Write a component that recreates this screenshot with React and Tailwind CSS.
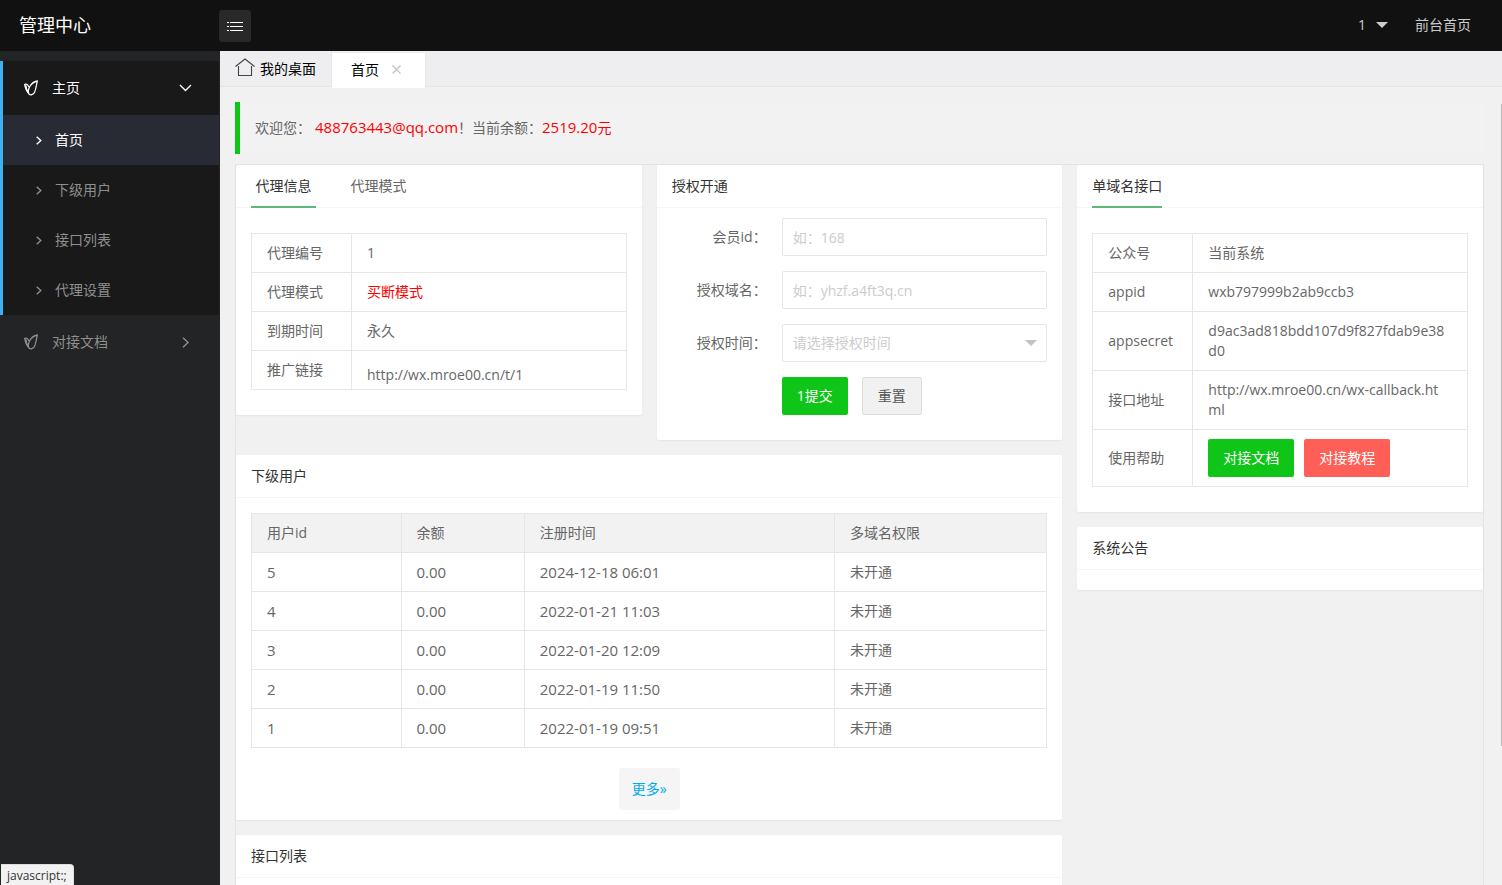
import React, { useState } from 'react';
import clsx from 'clsx';

const sideItems = ['首页', '下级用户', '接口列表', '代理设置'];

const users = [
  { id: 5, balance: '0.00', time: '2024-12-18 06:01', multi: '未开通' },
  { id: 4, balance: '0.00', time: '2022-01-21 11:03', multi: '未开通' },
  { id: 3, balance: '0.00', time: '2022-01-20 12:09', multi: '未开通' },
  { id: 2, balance: '0.00', time: '2022-01-19 11:50', multi: '未开通' },
  { id: 1, balance: '0.00', time: '2022-01-19 09:51', multi: '未开通' }
];

function LeafIcon() {
  return (
    <svg className="w-[14px] h-[16px] shrink-0" viewBox="0 0 14 16" fill="none" stroke="currentColor" strokeWidth="1.3" strokeLinejoin="round">
      <path d="M13.300 1C10.500 1.600 7.200 3.800 5.600 6.800 4.300 9.300 4 12.600 5.200 14.300c1.400 1 3.700.4 5-1.500C12 10 12.300 5 13.300 1z" />
      <path d="M4.800 13.600C2.600 11.400 1.300 8.200.700 4.400 2.600 3.600 4.100 4.600 4.700 7M1.800 5.200c.3 2.600 1 5 2.200 6.400" />
    </svg>
  );
}

function Arrow({ className, d, box }) {
  return (
    <svg className={className} viewBox={box} fill="none" stroke="currentColor" strokeWidth="1.4">
      <path d={d} />
    </svg>
  );
}

function Card({ children }) {
  return <section className="bg-white rounded-xs shadow-[0_1px_2px_0_rgba(0,0,0,0.05)]">{children}</section>;
}

function CardTitle({ children }) {
  return <h2 className="h-[43px] px-[15px] leading-[42px] border-b border-[#f6f6f6] text-[#333]">{children}</h2>;
}

function CardTabs({ items }) {
  const [active, setActive] = useState(0);

  return (
    <div className="flex gap-[30px] h-[43px] px-[15px] border-b border-[#f6f6f6]">
      {items.map((item, idx) => (
        <button
          key={item}
          type="button"
          onClick={() => setActive(idx)}
          className={clsx(
            'h-[43px] min-w-[65px] border-b-2 leading-[38px]',
            idx === active ? 'border-[#5fb878] text-[#333]' : 'border-transparent'
          )}
        >
          {item}
        </button>
      ))}
    </div>
  );
}

function InfoTable({ rows }) {
  return (
    <table className="w-full table-fixed border-collapse">
      <tbody>
        {rows.map(row => (
          <tr key={row.label}>
            <th scope="row" className="w-[100px] px-[15px] py-[9px] border border-[#e6e6e6] text-left font-normal">
              {row.label}
            </th>
            <td className={clsx('pl-[15px] pr-5 border border-[#e6e6e6] break-all', row.className || 'py-[9px]')}>{row.value}</td>
          </tr>
        ))}
      </tbody>
    </table>
  );
}

function Field({ id, label, children }) {
  return (
    <div className="flex">
      <label htmlFor={id} className="w-[110px] shrink-0 pr-[15px] text-right leading-[38px]">
        {label}
      </label>
      <div className="relative flex-1 min-w-0">{children}</div>
    </div>
  );
}

function Header() {
  return (
    <header className="flex items-center h-[51px] shrink-0 bg-[#111] text-[#ccc]">
      <h1 className="w-[219px] shrink-0 pl-[19px] pb-[2px] text-[18px] text-white">管理中心</h1>
      <button type="button" aria-label="菜单" className="flex items-center justify-center w-8 h-8 rounded-[3px] bg-[#292929] text-white">
        <svg className="w-4 h-3" viewBox="0 0 16 12" stroke="currentColor" strokeWidth="1">
          <path d="M0 2.500h2M3 2.500h13M0 6.500h2M3 6.500h13M0 10.500h2M3 10.500h13" />
        </svg>
      </button>
      <nav className="ml-auto flex items-center gap-[27px] pr-[31px] pb-[2px]">
        <button type="button" className="flex items-center gap-[10px]">
          1
          <svg className="w-3 h-[6px]" viewBox="0 0 12 6" fill="currentColor">
            <path d="M0 0h12L6 6z" />
          </svg>
        </button>
        <a href="#front">前台首页</a>
      </nav>
    </header>
  );
}

function Sidebar() {
  const [current, setCurrent] = useState('首页');

  return (
    <aside className="w-[220px] shrink-0 pt-[10px] pr-px bg-[#222425] text-[#8f8f8f]">
      <div className="border-l-3 border-[#3db3f2] bg-[#191919]">
        <button type="button" className="flex items-center w-full h-[54px] pl-[21px] pr-[27px] text-white">
          <LeafIcon />
          <span className="ml-[14px]">主页</span>
          <Arrow className="ml-auto w-[13px] h-[8px]" box="0 0 13 8" d="M1 1l5.500 5.500L12 1" />
        </button>
        {sideItems.map(item => (
          <a
            key={item}
            href="#page"
            onClick={() => setCurrent(item)}
            className={clsx(
              'flex items-center gap-[13px] h-[50px] pl-[33px]',
              item === current && 'bg-[#282b33] text-white'
            )}
          >
            <Arrow className="w-[6px] h-[9px]" box="0 0 6 9" d="M.7.7L4.800 4.500.7 8.300" />
            {item}
          </a>
        ))}
      </div>
      <button type="button" className="flex items-center w-full h-[54px] pl-6 pr-[30px]">
        <LeafIcon />
        <span className="ml-[14px]">对接文档</span>
        <Arrow className="ml-auto w-[7px] h-[11px]" box="0 0 7 11" d="M1 .7l5 4.800-5 4.800" />
      </button>
    </aside>
  );
}

function PageTabs() {
  return (
    <div className="flex h-[36px] shrink-0 bg-[#eeeef0] border-b border-[#e4e4e4] text-black">
      <button type="button" className="flex items-center gap-[5px] pl-[15px] pr-[15px] border-r border-[#e4e4e4]">
        <svg className="w-5 h-[19px] mb-[2px]" viewBox="0 0 20 19" fill="none" stroke="#444" strokeWidth="1.100">
          <path d="M.5 8.500L10 1l9.500 7.500M3.500 8v9.500h13V8" />
        </svg>
        我的桌面
      </button>
      <div className="relative z-10 flex items-center gap-[13px] h-[35px] mt-[2px] pl-[19px] pr-6 pb-[2px] bg-white border-r border-[#e9e9e9]">
        首页
        <button type="button" aria-label="关闭" className="text-[#c2c2c2]">
          <svg className="w-[9px] h-[9px]" viewBox="0 0 9 9" stroke="currentColor" strokeWidth="1.200">
            <path d="M.5.500l8 8M8.500.500l-8 8" />
          </svg>
        </button>
      </div>
    </div>
  );
}

function AuthForm() {
  const [period, setPeriod] = useState('');
  const inputClass = 'block w-full h-[38px] px-[10px] border border-[#e6e6e6] rounded-xs bg-white placeholder:text-[#ccc] outline-none';

  return (
    <form className="flex flex-col gap-[15px] px-[15px] pt-[10px] pb-[25px]" onSubmit={e => e.preventDefault()}>
      <Field id="member" label="会员id：">
        <input id="member" type="text" placeholder="如：168" className={inputClass} />
      </Field>
      <Field id="domain" label="授权域名：">
        <input id="domain" type="text" placeholder="如：yhzf.a4ft3q.cn" className={inputClass} />
      </Field>
      <Field id="period" label="授权时间：">
        <select
          id="period"
          value={period}
          onChange={e => setPeriod(e.target.value)}
          className={clsx(inputClass, 'appearance-none', period === '' && 'text-[#ccc]')}
        >
          <option value="">请选择授权时间</option>
          <option value="1">一年</option>
          <option value="0">永久</option>
        </select>
        <svg className="absolute right-[10px] top-4 w-3 h-[6px] pointer-events-none" viewBox="0 0 12 6" fill="#c2c2c2">
          <path d="M0 0h12L6 6z" />
        </svg>
      </Field>
      <div className="flex gap-[14px] pl-[110px]">
        <button type="submit" className="h-[38px] px-[15px] rounded-xs bg-[#0fc518] text-white">1提交</button>
        <button
          type="reset"
          onClick={() => setPeriod('')}
          className="h-[38px] px-[15px] rounded-xs border border-[#ddd] bg-[#f1f1f1] text-[#555]"
        >
          重置
        </button>
      </div>
    </form>
  );
}

function UserTable() {
  const cell = 'px-[15px] py-[9px] border border-[#e6e6e6] text-left font-normal';

  return (
    <table className="w-full table-fixed border-collapse">
      <thead>
        <tr className="bg-[#f2f2f2]">
          <th className={clsx(cell, 'w-[18.8%]')}>用户id</th>
          <th className={clsx(cell, 'w-[15.5%]')}>余额</th>
          <th className={clsx(cell, 'w-[39%]')}>注册时间</th>
          <th className={cell}>多域名权限</th>
        </tr>
      </thead>
      <tbody>
        {users.map(user => (
          <tr key={user.id}>
            <td className={clsx(cell, 'text-[15px]')}>{user.id}</td>
            <td className={clsx(cell, 'text-[15px]')}>{user.balance}</td>
            <td className={clsx(cell, 'text-[15px]')}>{user.time}</td>
            <td className={cell}>{user.multi}</td>
          </tr>
        ))}
      </tbody>
    </table>
  );
}

const agentRows = [
  { label: '代理编号', value: '1' },
  { label: '代理模式', value: '买断模式', className: 'py-[9px] text-[#f00]' },
  { label: '到期时间', value: '永久' },
  { label: '推广链接', value: 'http://wx.mroe00.cn/t/1', className: 'pt-[14px] pb-1' }
];

const apiRows = [
  { label: '公众号', value: '当前系统' },
  { label: 'appid', value: 'wxb797999b2ab9ccb3' },
  { label: 'appsecret', value: 'd9ac3ad818bdd107d9f827fdab9e38d0' },
  { label: '接口地址', value: 'http://wx.mroe00.cn/wx-callback.html' },
  {
    label: '使用帮助',
    value: (
      <div className="flex gap-[10px]">
        <a href="#docs" className="px-[15px] leading-[38px] rounded-xs bg-[#0fc518] text-white">对接文档</a>
        <a href="#guide" className="px-[15px] leading-[38px] rounded-xs bg-[#ff5f57] text-white">对接教程</a>
      </div>
    )
  }
];

export default function App() {
  return (
    <div lang="zh-CN" className="flex flex-col h-screen overflow-hidden font-['Open_Sans','Noto_Sans_CJK_SC',sans-serif] text-[14px] leading-[20px] text-[#666]">
      <Header />
      <div className="flex flex-1 min-h-0">
        <Sidebar />
        <div className="relative flex flex-col flex-1 min-w-0">
          <PageTabs />
          <main className="flex-1 min-h-0 overflow-hidden bg-[#f1f1f1] pt-[15px] pl-[15px] pr-[18px]">
            <blockquote className="mb-[10px] px-[15px] py-4 border-l-5 border-[#0fc518] bg-[#f2f2f2]">
              欢迎您：
              <span className="ml-1 text-[15px] leading-[16px] text-[#f00]">488763443@qq.com</span>！当前余额：
              <span className="text-[#f00]"><span className="text-[15px] leading-[16px]">2519.20</span>元</span>
            </blockquote>

            <div className="grid grid-cols-3 gap-[15px] items-start border border-[#e4e4e4]">
              <div className="col-span-2 grid grid-cols-2 gap-[15px] items-start">
                <Card>
                  <CardTabs items={['代理信息', '代理模式']} />
                  <div className="px-[15px] py-[25px]">
                    <InfoTable rows={agentRows} />
                  </div>
                </Card>
                <Card>
                  <CardTitle>授权开通</CardTitle>
                  <AuthForm />
                </Card>
                <div className="col-span-2">
                  <Card>
                    <CardTitle>下级用户</CardTitle>
                    <div className="px-[15px] pt-[15px] pb-[10px] text-center">
                      <UserTable />
                      <a href="#more" className="inline-block mt-5 px-[13px] align-top leading-[42px] rounded-[3px] bg-[#f5f5f5] text-[#01aaed]">
                        更多»
                      </a>
                    </div>
                  </Card>
                </div>
                <div className="col-span-2">
                  <Card>
                    <CardTitle>接口列表</CardTitle>
                    <div className="h-[60px]"></div>
                  </Card>
                </div>
              </div>

              <div className="flex flex-col gap-[15px]">
                <Card>
                  <CardTabs items={['单域名接口']} />
                  <div className="px-[15px] py-[25px]">
                    <InfoTable rows={apiRows} />
                  </div>
                </Card>
                <Card>
                  <CardTitle>系统公告</CardTitle>
                  <div className="h-5"></div>
                </Card>
              </div>
            </div>
          </main>
          {/* scroll thumb */}
          <div className="absolute right-0 top-[53px] w-px h-[77%] bg-[#b8b8b8]"></div>
        </div>
      </div>

      {/* link status bubble */}
      <div className="fixed left-px bottom-0 h-[21px] px-[6px] border-t border-r border-[#ddd] rounded-tr-[4px] bg-[#f2f2f2] text-[12px] leading-[22px] text-[#333]">
        javascript:;
      </div>
    </div>
  );
}
